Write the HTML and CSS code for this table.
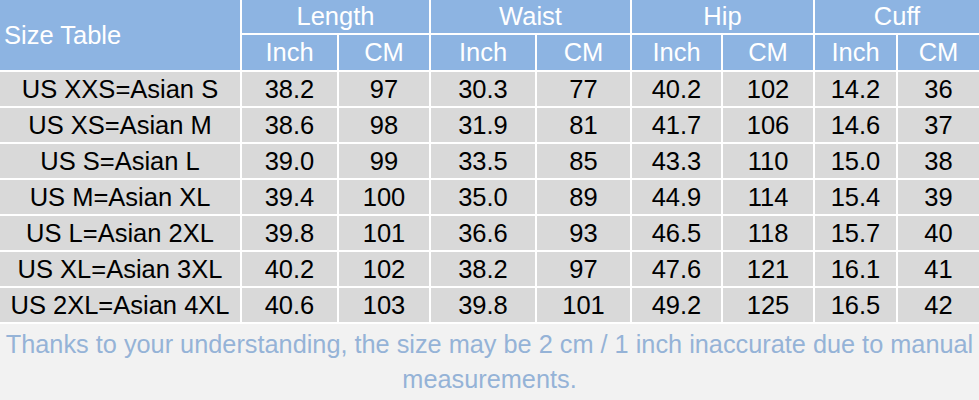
FILE: index.html
```html
<!DOCTYPE html>
<html lang="en">

<head>
    <meta charset="UTF-8">
    <meta name="viewport" content="width=device-width, initial-scale=1.0">
    <title>Size Table</title>

    <link rel="stylesheet" href="styles.css">

</head>

<body>

    <div class="size-table">
        <div class="head title">Size Table</div>
        <div class="head group">Length</div>
        <div class="head group">Waist</div>
        <div class="head group">Hip</div>
        <div class="head group">Cuff</div>

        <div class="head">Inch</div>
        <div class="head">CM</div>
        <div class="head">Inch</div>
        <div class="head">CM</div>
        <div class="head">Inch</div>
        <div class="head">CM</div>
        <div class="head">Inch</div>
        <div class="head">CM</div>

        <div class="cell">US XXS=Asian S</div>
        <div class="cell">38.2</div>
        <div class="cell">97</div>
        <div class="cell">30.3</div>
        <div class="cell">77</div>
        <div class="cell">40.2</div>
        <div class="cell">102</div>
        <div class="cell">14.2</div>
        <div class="cell">36</div>

        <div class="cell">US XS=Asian M</div>
        <div class="cell">38.6</div>
        <div class="cell">98</div>
        <div class="cell">31.9</div>
        <div class="cell">81</div>
        <div class="cell">41.7</div>
        <div class="cell">106</div>
        <div class="cell">14.6</div>
        <div class="cell">37</div>

        <div class="cell">US S=Asian L</div>
        <div class="cell">39.0</div>
        <div class="cell">99</div>
        <div class="cell">33.5</div>
        <div class="cell">85</div>
        <div class="cell">43.3</div>
        <div class="cell">110</div>
        <div class="cell">15.0</div>
        <div class="cell">38</div>

        <div class="cell">US M=Asian XL</div>
        <div class="cell">39.4</div>
        <div class="cell">100</div>
        <div class="cell">35.0</div>
        <div class="cell">89</div>
        <div class="cell">44.9</div>
        <div class="cell">114</div>
        <div class="cell">15.4</div>
        <div class="cell">39</div>

        <div class="cell">US L=Asian 2XL</div>
        <div class="cell">39.8</div>
        <div class="cell">101</div>
        <div class="cell">36.6</div>
        <div class="cell">93</div>
        <div class="cell">46.5</div>
        <div class="cell">118</div>
        <div class="cell">15.7</div>
        <div class="cell">40</div>

        <div class="cell">US XL=Asian 3XL</div>
        <div class="cell">40.2</div>
        <div class="cell">102</div>
        <div class="cell">38.2</div>
        <div class="cell">97</div>
        <div class="cell">47.6</div>
        <div class="cell">121</div>
        <div class="cell">16.1</div>
        <div class="cell">41</div>

        <div class="cell">US 2XL=Asian 4XL</div>
        <div class="cell">40.6</div>
        <div class="cell">103</div>
        <div class="cell">39.8</div>
        <div class="cell">101</div>
        <div class="cell">49.2</div>
        <div class="cell">125</div>
        <div class="cell">16.5</div>
        <div class="cell">42</div>
    </div>

    <p class="note">Thanks to your understanding, the size may be 2 cm / 1 inch inaccurate due to manual measurements.</p>

</body>

</html>
```

FILE: styles.css
```css
body {
    margin: 0;
    background-color: #f2f2f2;
    font-family: "Liberation Sans", Arial, sans-serif;
    font-size: 25.5px;
}

.size-table {
    display: grid;
    grid-template-columns: 240px 95px 90px 104px 93px 89px 90px 81px 1fr;
    grid-template-rows: 33px 35px repeat(7, 34px);
    gap: 2px;
    padding-bottom: 2px;
    background-color: #ffffff;
}

.size-table .head {
    display: flex;
    justify-content: center;
    align-items: center;
    background-color: #8db4e2;
    color: #ffffff;
}

.size-table .title {
    grid-row: span 2;
    justify-content: flex-start;
    padding-left: 4px;
}

.size-table .group {
    grid-column: span 2;
}

.size-table .cell {
    display: flex;
    justify-content: center;
    align-items: center;
    background-color: #d9d9d9;
    color: #000000;
}

.note {
    margin: 0;
    padding-top: 3px;
    text-align: center;
    font-size: 25.3px;
    line-height: 35px;
    color: #95b3d7;
}
```
